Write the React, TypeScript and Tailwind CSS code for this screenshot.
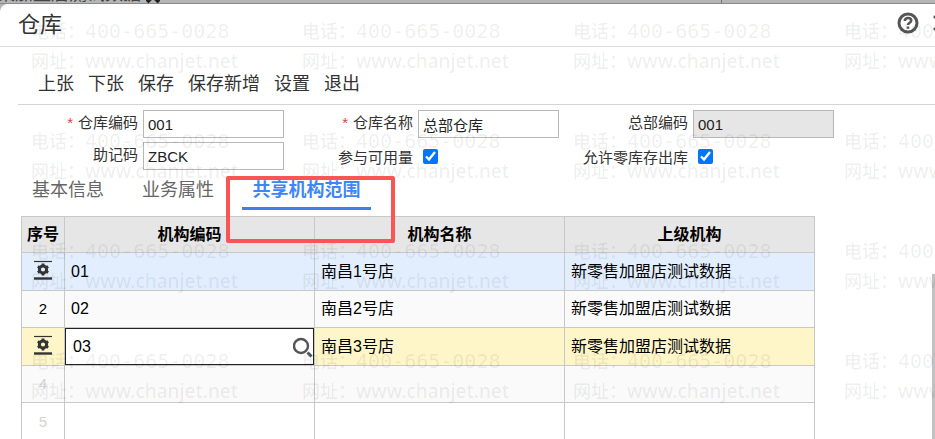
const actions = ["上张", "下张", "保存", "保存新增", "设置", "退出"];

const rows = [
  { no: 1, code: "01", name: "南昌1号店", parent: "新零售加盟店测试数据", bg: "bg-[#e2eefe]", gear: true },
  { no: 2, code: "02", name: "南昌2号店", parent: "新零售加盟店测试数据", bg: "bg-[#fafafa]" },
  { no: 3, code: "03", name: "南昌3号店", parent: "新零售加盟店测试数据", bg: "bg-[#fef5c8]", gear: true, editing: true },
  { no: 4, code: "", name: "", parent: "", bg: "bg-[#fafafa]", empty: true },
  { no: 5, code: "", name: "", parent: "", bg: "bg-white", empty: true },
];

function RowGear() {
  return (
    <svg width="18" height="24" viewBox="0 0 18 24" className="mx-auto" aria-hidden="true">
      <path d="M0 1.500h18" stroke="#333" strokeWidth="1.200" />
      <path d="M0 18.500h18" stroke="#333" strokeWidth="2.400" />
      <circle cx="9" cy="9.500" r="3.600" fill="none" stroke="#333" strokeWidth="3" />
      <path
        d="M9 3.500v2M9 13.500v2M3.800 6.500l1.700 1M12.500 11.500l1.700 1M3.800 12.500l1.700-1M12.500 7.500l1.700-1"
        stroke="#333"
        strokeWidth="2.800"
      />
    </svg>
  );
}

function HelpIcon() {
  return (
    <svg width="22" height="22" viewBox="0 0 22 22" fill="none" aria-hidden="true">
      <circle cx="11" cy="11" r="9" stroke="#555" strokeWidth="3" />
      <path d="M7.800 9c0-2 1.400-3 3.200-3s3.200 1 3.200 2.700c0 2-3.200 2.200-3.200 4.300" stroke="#555" strokeWidth="2.600" />
      <path d="M11 14.500v2.300" stroke="#555" strokeWidth="2.600" />
    </svg>
  );
}

function SearchIcon() {
  return (
    <svg width="20" height="22" viewBox="0 0 20 22" fill="none" stroke="#555" aria-hidden="true">
      <circle cx="8" cy="10" r="7" strokeWidth="2.400" />
      <path d="M14.500 16.500l4 4" strokeWidth="3" />
    </svg>
  );
}

function TextField({ id, label, value, required, disabled }: {
  id: string;
  label: string;
  value: string;
  required?: boolean;
  disabled?: boolean;
}) {
  return (
    <div className="flex items-center gap-[5px]">
      <label htmlFor={id} className="w-[138px] shrink-0 pb-[2px] text-right">
        {required && <span className="mr-[5px] text-[#e23c50]">*</span>}
        {label}
      </label>
      <input
        id={id}
        defaultValue={value}
        disabled={disabled}
        className="h-7 w-[141px] border border-[#b8b8b8] bg-white px-1 text-[#222] disabled:bg-[#e6e6e6]"
      />
    </div>
  );
}

function CheckField({ id, label }: { id: string; label: string }) {
  return (
    <div className="flex items-center gap-[10px]">
      <label htmlFor={id} className="w-[138px] shrink-0 pt-1 text-right">
        {label}
      </label>
      <input id={id} type="checkbox" defaultChecked className="size-[15px] accent-[#0075ff]" />
    </div>
  );
}

function Watermark() {
  return (
    <div
      aria-hidden="true"
      className="pointer-events-none absolute inset-0 overflow-hidden pt-3 pl-[31px] text-black/[0.07]"
    >
      <div className="grid grid-cols-[repeat(4,271px)]">
        {Array.from({ length: 16 }, (_, i) => (
          <div key={i} className="h-[110px] font-['Noto_Sans','Noto_Sans_CJK_SC',sans-serif] text-lg/[30px] font-medium">
            <p className="flex">
              <span className="w-[54px]">电话：</span>
              <span className="font-['DejaVu_Sans_Mono',monospace] text-xl/[30px]">400-665-0028</span>
            </p>
            <p className="flex">
              <span className="w-[54px]">网址：</span>
              <span className="text-[19px]/[30px]">www.chanjet.net</span>
            </p>
          </div>
        ))}
      </div>
    </div>
  );
}

export default function App() {
  return (
    <div className="relative h-screen overflow-hidden bg-[#b5b5b5] font-['Liberation_Sans','Noto_Sans_CJK_SC',sans-serif] text-[15px] text-[#333]">
      <div className="flex h-1 items-end justify-between overflow-hidden border-b border-[#8a8a8a]">
        <p className="-ml-[3px] flex items-end text-lg/[18px] text-[#444]">
          集加盟店测试数据
          <svg width="14" height="14" viewBox="0 0 14 14" className="ml-[5px]" aria-hidden="true">
            <path d="M1 1l12 12M13 1L1 13" stroke="#222" strokeWidth="4" />
          </svg>
        </p>
        <span className="mr-[213px] h-1 border-l border-[#777]" />
      </div>

      <main className="relative h-full rounded-tl-lg bg-white">
        <header className="flex h-[43px] items-center justify-between border-b border-[#ddd] pl-[18px]">
          <h1 className="pb-[2px] text-[22px]">仓库</h1>
          <div className="flex w-[38px] shrink-0 items-center gap-[14px] overflow-hidden pb-1">
            <button aria-label="帮助" className="shrink-0">
              <HelpIcon />
            </button>
            <button aria-label="关闭" className="shrink-0">
              <svg width="16" height="16" viewBox="0 0 16 16" aria-hidden="true">
                <path d="M1 1l14 14M15 1L1 15" stroke="#555" strokeWidth="3" />
              </svg>
            </button>
          </div>
        </header>

        <nav className="ml-[18px] flex h-[58px] items-end gap-[14px] border-b border-[#d4d4d4] pb-2 pl-5 text-lg/6">
          {actions.map((a) => (
            <button key={a}>{a}</button>
          ))}
        </nav>

        <form className="mt-[5px] grid grid-cols-[repeat(3,275px)] gap-y-1">
          <TextField id="code" label="仓库编码" value="001" required />
          <TextField id="name" label="仓库名称" value="总部仓库" required />
          <TextField id="hq" label="总部编码" value="001" disabled />
          <TextField id="memo" label="助记码" value="ZBCK" />
          <CheckField id="available" label="参与可用量" />
          <CheckField id="zero" label="允许零库存出库" />
        </form>

        <div role="tablist" className="mt-1 flex pl-8 text-lg/7 text-[#666]">
          <button role="tab" className="mr-[38px] h-9 pb-1">基本信息</button>
          <button role="tab" className="mr-7 h-9 pb-1">业务属性</button>
          <div className="relative">
            <button
              role="tab"
              aria-selected="true"
              className="h-9 w-[129px] border-b-3 border-[#3f7fe8] pb-px font-bold text-[#3f86f5]"
            >
              共享机构范围
            </button>
            <span className="pointer-events-none absolute top-[2px] -left-4 z-10 h-[67px] w-[169px] rounded-xs border-4 border-[#f95555]" />
          </div>
        </div>

        <table className="mt-[6px] ml-[21px] w-[794px] table-fixed border-collapse text-base/6 text-black">
          <thead>
            <tr className="h-9 bg-[#e6e6e6]">
              <th className="w-[43px] border border-[#c8c8c8]">序号</th>
              <th className="w-[250px] border border-[#c8c8c8]">机构编码</th>
              <th className="w-[250px] border border-[#c8c8c8]">机构名称</th>
              <th className="w-[250px] border border-[#c8c8c8]">上级机构</th>
            </tr>
          </thead>
          <tbody>
            {rows.map((r) => (
              <tr key={r.no} className={`odd:h-[38px] even:h-[37px] ${r.bg}`}>
                <td className={`border border-[#c8c8c8] text-center text-[15px] ${r.empty ? "text-[#d4d4d4]" : ""}`}>
                  {r.gear ? <RowGear /> : r.no}
                </td>
                <td className={`border border-[#c8c8c8] ${r.editing ? "p-0" : "px-[6px]"}`}>
                  {r.editing ? (
                    <div className="flex h-[37px] items-center border border-[#222] bg-white pl-[7px]">
                      <input aria-label="机构编码" defaultValue={r.code} className="min-w-0 flex-1 outline-none" />
                      <button aria-label="查找">
                        <SearchIcon />
                      </button>
                    </div>
                  ) : (
                    r.code
                  )}
                </td>
                <td className="border border-[#c8c8c8] px-[6px]">{r.name}</td>
                <td className="border border-[#c8c8c8] px-[6px]">{r.parent}</td>
              </tr>
            ))}
          </tbody>
        </table>

        <div className="absolute top-[270px] right-0 h-full w-[3px] bg-[#c1c1c1]" />
        <Watermark />
      </main>
    </div>
  );
}
